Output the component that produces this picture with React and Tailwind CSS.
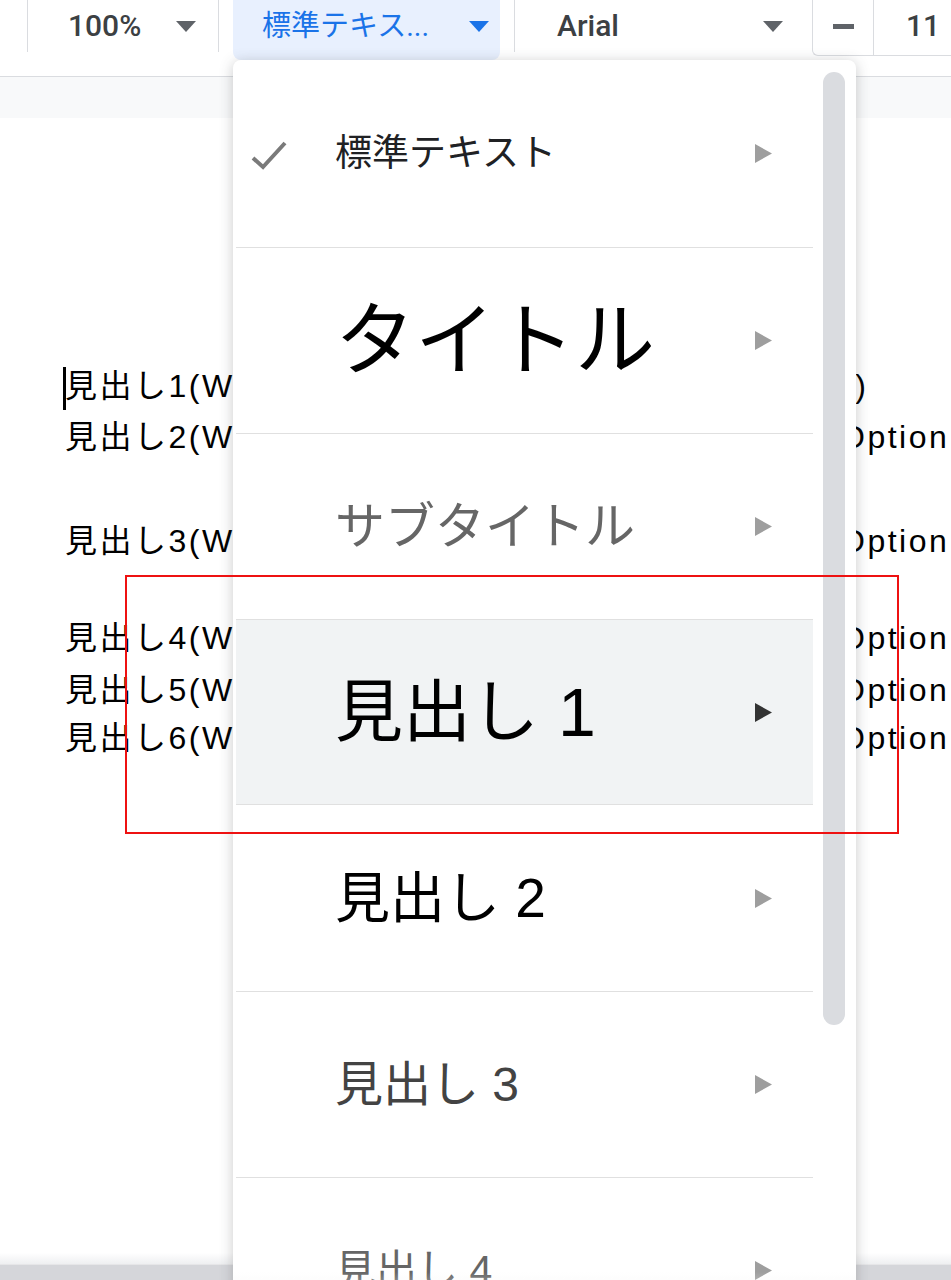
import React from "react";

const Caret = ({ color = "#5f6368" }) => (
  <svg width="20" height="11" viewBox="0 0 20 11" className="shrink-0">
    <polygon points="0,0 20,0 10,11" fill={color} />
  </svg>
);

const Arrow = ({ dark }) => (
  <svg width="17" height="19" viewBox="0 0 17 19" className="shrink-0 ml-auto mr-[41px]">
    <polygon points="0,0 17,9.5 0,19" fill={dark ? "#333333" : "#9e9e9e"} />
  </svg>
);

const docLines = [
  { id: 1, cls: "mt-0", left: "見出し1(Windows: Ctrl + Alt + 1, Mac: ⌘ + Option + ", right: "1)", rcls: "-ml-[5px]" },
  { id: 2, cls: "mt-[11px]", left: "見出し2(Windows: Ctrl + Alt + 2, Mac: ⌘ + ", right: "Option + 2)", rcls: "" },
  { id: 3, cls: "mt-[64px]", left: "見出し3(Windows: Ctrl + Alt + 3, Mac: ⌘ + ", right: "Option + 3)", rcls: "" },
  { id: 4, cls: "mt-[57px]", left: "見出し4(Windows: Ctrl + Alt + 4, Mac: ⌘ + ", right: "Option + 4)", rcls: "" },
  { id: 5, cls: "mt-[12px]", left: "見出し5(Windows: Ctrl + Alt + 5, Mac: ⌘ + ", right: "Option + 5)", rcls: "" },
  { id: 6, cls: "mt-[8px]", left: "見出し6(Windows: Ctrl + Alt + 6, Mac: ⌘ + ", right: "Option + 6)", rcls: "" },
];

const items = [
  { label: "標準テキスト", cls: "text-[37px] text-[#202124]", checked: true, h: "h-[187px]" },
  { label: "タイトル", cls: "text-[80px] text-[#000000]", h: "h-[186px] border-t border-[#e0e0e0]" },
  { label: "サブタイトル", cls: "text-[50px] text-[#666666]", h: "h-[186px] border-t border-[#e0e0e0]" },
  { label: "見出し 1", cls: "text-[68px] text-[#000000]", hover: true, h: "h-[186px] border-t border-b border-[#e0e0e0] bg-[#f1f3f4]" },
  { label: "見出し 2", cls: "text-[55px] text-[#000000]", h: "h-[186px]" },
  { label: "見出し 3", cls: "text-[48px] text-[#434343]", h: "h-[186px] border-t border-[#e0e0e0]" },
  { label: "見出し 4", cls: "text-[41px] text-[#666666]", h: "h-[186px] border-t border-[#e0e0e0]" },
];

export default function App() {
  return (
    <div className="relative w-[951px] h-[1280px] overflow-hidden bg-white flex flex-col">
      {/* Toolbar */}
      <div className="h-[77px] shrink-0 flex items-start border-b border-[#dadce0] bg-white font-['Roboto','Noto_Sans_CJK_JP',sans-serif] font-medium text-[30px] text-[#3c4043]">
        <div className="w-[28px] h-[52px] border-r border-[#dadce0]" />
        <div className="w-[191px] h-[52px] border-r border-[#dadce0] flex items-center pl-[40px]">
          <span className="leading-none">100%</span>
          <span className="ml-[35px] flex"><Caret /></span>
        </div>
        <div className="w-[14px]" />
        <div className="w-[267px] h-[60px] pb-[8px] bg-[#e8f0fe] rounded-b-lg flex items-center pl-[29px] pr-[11px] text-[#1a73e8] font-normal text-[29px]">
          <span className="leading-none whitespace-nowrap">標準テキス...</span>
          <span className="ml-auto flex"><Caret color="#1a73e8" /></span>
        </div>
        <div className="w-[14px]" />
        <div className="w-[298px] h-[52px] border-l border-[#dadce0] flex items-center pl-[42px] pr-[29px]">
          <span className="leading-none">Arial</span>
          <span className="ml-auto flex"><Caret /></span>
        </div>
        <div className="flex-1 h-[56px] border-l border-b border-[#dadce0] rounded-bl-md flex">
          <div className="w-[61px] border-r border-[#dadce0] flex items-center justify-center pb-[3px]">
            <div className="w-[21px] h-[5px] bg-[#5f6368]" />
          </div>
          <div className="flex items-center pl-[32px] pb-[3px] leading-none">11</div>
        </div>
      </div>

      {/* Ruler band */}
      <div className="h-[41px] shrink-0 bg-[#f8f9fa]" />

      {/* Document */}
      <div className="flex-1 bg-white pt-[248px] font-['Liberation_Sans','Noto_Sans_CJK_JP',sans-serif] text-[32px] tracking-[2.5px] text-black">
        {docLines.map((l) => (
          <div key={l.id} className={`relative flex h-[40px] leading-[40px] pl-[65px] ${l.cls}`}>
            {l.id === 1 && (
              <span className="absolute left-[63px] top-[1px] w-[3px] h-[43px] bg-black" />
            )}
            <div className="w-[775px] shrink-0 overflow-hidden whitespace-nowrap">{l.left}</div>
            <div className={`whitespace-nowrap ${l.rcls}`}>{l.right}</div>
          </div>
        ))}
      </div>

      {/* Bottom scrollbar area */}
      <div className="h-[11px] shrink-0 bg-linear-to-b from-white to-[#eeeff1]" />
      <div className="h-[16px] shrink-0 bg-[#d5d6da] border-t border-[#e6e6e8]" />

      {/* Dropdown menu */}
      <div className="absolute left-[233px] top-[60px] w-[623px] h-[1240px] bg-white rounded-t-lg shadow-[0_2px_14px_rgba(60,64,67,0.28)] font-['Liberation_Sans','Noto_Sans_CJK_JP',sans-serif]">
        <div className="w-[580px] pl-[3px] flex flex-col">
          {items.map((it, i) => (
            <div key={i} className={`flex items-center ${it.h}`}>
              <div className="w-[99px] shrink-0 pl-[14px] flex items-center">
                {it.checked && (
                  <svg width="38" height="32" viewBox="0 0 38 32">
                    <polyline
                      points="3,20 13,29 35,5"
                      fill="none"
                      stroke="#7a7a7a"
                      strokeWidth="4"
                    />
                  </svg>
                )}
              </div>
              <span className={`leading-none whitespace-nowrap ${it.cls}`}>{it.label}</span>
              <Arrow dark={it.hover} />
            </div>
          ))}
        </div>
        <div className="absolute left-[590px] top-[12px] w-[22px] h-[953px] rounded-full bg-[#dadce0]" />
        <div className="absolute left-0 right-0 bottom-0 h-[28px] bg-linear-to-b from-white/0 to-[#f3f3f3]/70" />
      </div>

      {/* Red highlight box */}
      <div className="absolute left-[125px] top-[575px] w-[774px] h-[259px] border-2 border-[#ee1111]" />
    </div>
  );
}
